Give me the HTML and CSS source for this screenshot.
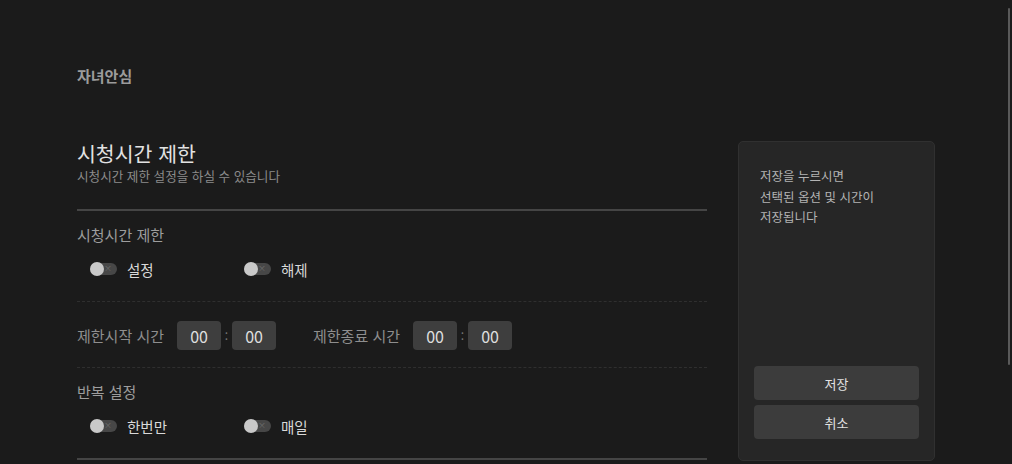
FILE: index.html
```html
<!DOCTYPE html>
<html lang="ko">
<head>
<meta charset="utf-8">
<title>자녀안심</title>
<link rel="stylesheet" href="styles.css">
</head>
<body>
<div class="page">
  <main class="main">
    <div class="crumb">자녀안심</div>
    <h1 class="title">시청시간 제한</h1>
    <p class="subtitle">시청시간 제한 설정을 하실 수 있습니다</p>

    <section class="section first">
      <div class="label">시청시간 제한</div>
      <div class="toggles">
        <div class="opt"><span class="toggle"><span class="knob"></span><span class="x">×</span></span><span class="opt-text">설정</span></div>
        <div class="opt"><span class="toggle"><span class="knob"></span><span class="x">×</span></span><span class="opt-text">해제</span></div>
      </div>
    </section>

    <section class="section time">
      <div class="time-group">
        <span class="time-label">제한시작 시간</span>
        <span class="box">00</span><span class="colon">:</span><span class="box">00</span>
      </div>
      <div class="time-group">
        <span class="time-label">제한종료 시간</span>
        <span class="box">00</span><span class="colon">:</span><span class="box">00</span>
      </div>
    </section>

    <section class="section last">
      <div class="label">반복 설정</div>
      <div class="toggles">
        <div class="opt"><span class="toggle"><span class="knob"></span><span class="x">×</span></span><span class="opt-text">한번만</span></div>
        <div class="opt"><span class="toggle"><span class="knob"></span><span class="x">×</span></span><span class="opt-text">매일</span></div>
      </div>
    </section>
  </main>

  <aside class="panel">
    <p class="note">저장을 누르시면<br>선택된 옵션 및 시간이<br>저장됩니다</p>
    <div class="actions">
      <button class="btn">저장</button>
      <button class="btn">취소</button>
    </div>
  </aside>
</div>
<div class="scrollbar"></div>
</body>
</html>
```

FILE: styles.css
```css
* { box-sizing: border-box; }
html, body {
  margin: 0;
  padding: 0;
  background: #1b1b1b;
  height: 100%;
  overflow: hidden;
}
body {
  font-family: "Noto Sans CJK KR", "Noto Sans", sans-serif;
  color: #dcdcdc;
}
.page {
  display: flex;
  align-items: flex-start;
  padding: 66px 0 0 77px;
  gap: 31px;
}
.main {
  width: 630px;
  display: flex;
  flex-direction: column;
}
.crumb {
  font-size: 15px;
  font-weight: 700;
  line-height: 20px;
  color: #9b9b9b;
}
.title {
  margin: 54px 0 0;
  font-size: 20.5px;
  font-weight: 400;
  line-height: 26px;
  color: #e2e2e2;
}
.subtitle {
  margin: 1px 0 0;
  font-size: 12.6px;
  line-height: 18px;
  color: #8c8c8c;
}
.section {
  border-bottom: 1px dashed #2f2f2f;
}
.section.first {
  margin-top: 24px;
  border-top: 2px solid #454545;
  padding: 14px 0 22px;
}
.section.last {
  padding: 14px 0 22px;
  border-bottom: 2px solid #454545;
}
.label {
  font-size: 15px;
  line-height: 20px;
  color: #9d9d9d;
}
.toggles {
  display: flex;
  margin-top: 14px;
  padding-left: 13px;
}
.opt {
  width: 154px;
  display: flex;
  align-items: center;
  height: 20px;
}
.toggle {
  position: relative;
  width: 27px;
  height: 12px;
  border-radius: 6px;
  background: #474747;
  flex: none;
}
.knob {
  position: absolute;
  left: 0;
  top: -1px;
  width: 14px;
  height: 14px;
  border-radius: 50%;
  background: #c9c9c9;
}
.x {
  position: absolute;
  right: 5px;
  top: -2px;
  font-size: 8px;
  line-height: 14px;
  color: #6e6e6e;
}
.opt-text {
  margin-left: 10px;
  font-size: 14.5px;
  color: #d9d9d9;
}
.time {
  display: flex;
  gap: 37px;
  padding: 19px 0 17px;
}
.time-group {
  display: flex;
  align-items: center;
}
.time-label {
  font-size: 15px;
  color: #8e8e8e;
  margin-right: 13px;
}
.box {
  width: 44px;
  height: 29px;
  border-radius: 4px;
  background: #3e3e3e;
  display: flex;
  align-items: center;
  justify-content: center;
  font-size: 16px;
  color: #dedede;
}
.colon {
  width: 11px;
  text-align: center;
  font-size: 12px;
  color: #777;
}
.panel {
  margin-top: 75px;
  width: 197px;
  height: 320px;
  background: #262626;
  border: 1px solid #303030;
  border-radius: 5px;
  padding: 24px 15px 21px;
  display: flex;
  flex-direction: column;
}
.note {
  margin: 0;
  padding-left: 6px;
  font-size: 12.5px;
  line-height: 20.5px;
  color: #b4b4b4;
}
.actions {
  margin-top: auto;
  display: flex;
  flex-direction: column;
  gap: 5px;
}
.btn {
  height: 34px;
  border: none;
  border-radius: 4px;
  background: #3c3c3c;
  color: #e2e2e2;
  font-family: inherit;
  font-size: 13px;
  font-weight: 400;
}
.scrollbar {
  position: absolute;
  left: 1008px;
  top: 8px;
  width: 2px;
  height: 357px;
  background: #5a5a5a;
  border-radius: 1px;
}
```
